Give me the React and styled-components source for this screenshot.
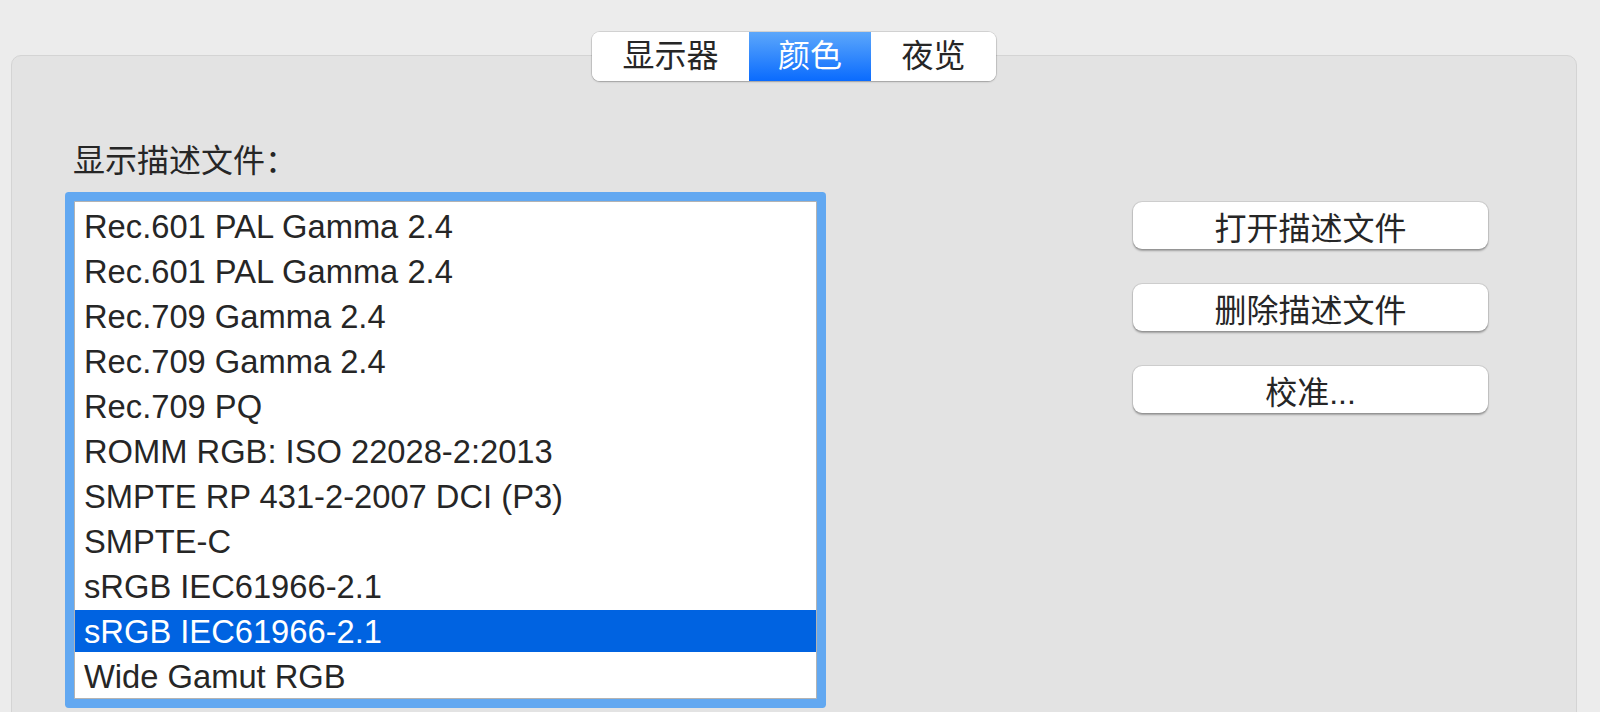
import React, { useState } from 'react'
import styled, { createGlobalStyle } from 'styled-components'

const profiles = [
  'Rec.601 PAL Gamma 2.4',
  'Rec.601 PAL Gamma 2.4',
  'Rec.709 Gamma 2.4',
  'Rec.709 Gamma 2.4',
  'Rec.709 PQ',
  'ROMM RGB: ISO 22028-2:2013',
  'SMPTE RP 431-2-2007 DCI (P3)',
  'SMPTE-C',
  'sRGB IEC61966-2.1',
  'sRGB IEC61966-2.1',
  'Wide Gamut RGB',
]

const tabs = [
  { name: '显示器', width: 157 },
  { name: '颜色', width: 122 },
  { name: '夜览', width: 125 },
]

const App = () => {
  const [tab, setTab] = useState(1)
  const [selected, setSelected] = useState(9)

  return (
    <>
      <GlobalStyle />
      <StyledPage>
        <StyledTabBar>
          <StyledSegmented>
            {tabs.map((t, i) => (
              <StyledTab
                key={t.name}
                $width={t.width}
                $active={tab === i}
                onClick={() => setTab(i)}
              >
                {t.name}
              </StyledTab>
            ))}
          </StyledSegmented>
        </StyledTabBar>

        <StyledPanel>
          <StyledGrid>
            <StyledLabel>显示描述文件：</StyledLabel>
            <span />
            <StyledList>
              {profiles.map((p, i) => (
                <StyledRow
                  key={i}
                  $selected={selected === i}
                  onClick={() => setSelected(i)}
                >
                  {p}
                </StyledRow>
              ))}
            </StyledList>
            <StyledButtonColumn>
              <StyledButton>打开描述文件</StyledButton>
              <StyledButton>删除描述文件</StyledButton>
              <StyledButton>校准...</StyledButton>
            </StyledButtonColumn>
          </StyledGrid>
        </StyledPanel>
      </StyledPage>
    </>
  )
}

const GlobalStyle = createGlobalStyle`
  html, body {
    margin: 0;
    padding: 0;
    overflow: hidden;
    background: #ececec;
  }
  body {
    font-family: "Liberation Sans", "Noto Sans CJK SC", sans-serif;
    color: #262626;
  }
`

const StyledPage = styled.div`
  padding: 32px 23px 0 11px;
  height: 712px;
  box-sizing: border-box;
  overflow: hidden;
`

const StyledTabBar = styled.div`
  display: flex;
  justify-content: center;
  position: relative;
  z-index: 1;
`

const StyledSegmented = styled.div`
  display: inline-flex;
  height: 49px;
  border-radius: 8px;
  overflow: hidden;
  background: #fff;
  box-shadow: 0 0 0 1px rgba(0, 0, 0, 0.1), 0 1px 2px rgba(0, 0, 0, 0.22);
`

const StyledTab = styled.button`
  width: ${p => p.$width}px;
  height: 49px;
  border: 0;
  padding: 0;
  margin: 0;
  font-family: "Liberation Sans", "Noto Sans CJK SC", sans-serif;
  font-size: 32px;
  line-height: 49px;
  cursor: pointer;
  color: ${p => (p.$active ? '#fff' : '#262626')};
  background: ${p =>
    p.$active ? 'linear-gradient(to bottom, #5ca7fb, #0a6bfe)' : '#fff'};
`

const StyledPanel = styled.div`
  margin-top: -26px;
  height: 700px;
  padding: 86px 0 0 62px;
  background: #e3e3e3;
  border: 1px solid #d4d4d4;
  border-radius: 10px;
`

const StyledGrid = styled.div`
  display: grid;
  grid-template-columns: 743px 355px;
  column-gap: 316px;
  align-items: start;
`

const StyledLabel = styled.div`
  font-size: 32px;
  line-height: 38px;
  margin: 0 0 21px -1px;
`

const StyledList = styled.div`
  height: 498px;
  box-sizing: border-box;
  padding-top: 3px;
  overflow: hidden;
  background: #fff;
  border: 1px solid #b3b3b3;
  border-radius: 1px;
  box-shadow: 0 0 0 9px #62a8f1;
`

const StyledRow = styled.div`
  height: 42px;
  margin-bottom: 3px;
  padding: 1px 0 0 9px;
  box-sizing: border-box;
  font-size: 32.7px;
  line-height: 42px;
  white-space: nowrap;
  cursor: default;
  color: ${p => (p.$selected ? '#fff' : '#262626')};
  background: ${p => (p.$selected ? '#0063e1' : 'transparent')};
`

const StyledButtonColumn = styled.div`
  display: flex;
  flex-direction: column;
  gap: 35px;
  margin-top: 1px;
`

const StyledButton = styled.button`
  height: 47px;
  padding: 0;
  border: 0;
  border-radius: 9px;
  background: #fff;
  font-family: "Liberation Sans", "Noto Sans CJK SC", sans-serif;
  font-size: 32px;
  color: #262626;
  cursor: pointer;
  box-shadow: 0 0 0 1px rgba(0, 0, 0, 0.08), 0 1.5px 2px rgba(0, 0, 0, 0.3);
`

export default App
